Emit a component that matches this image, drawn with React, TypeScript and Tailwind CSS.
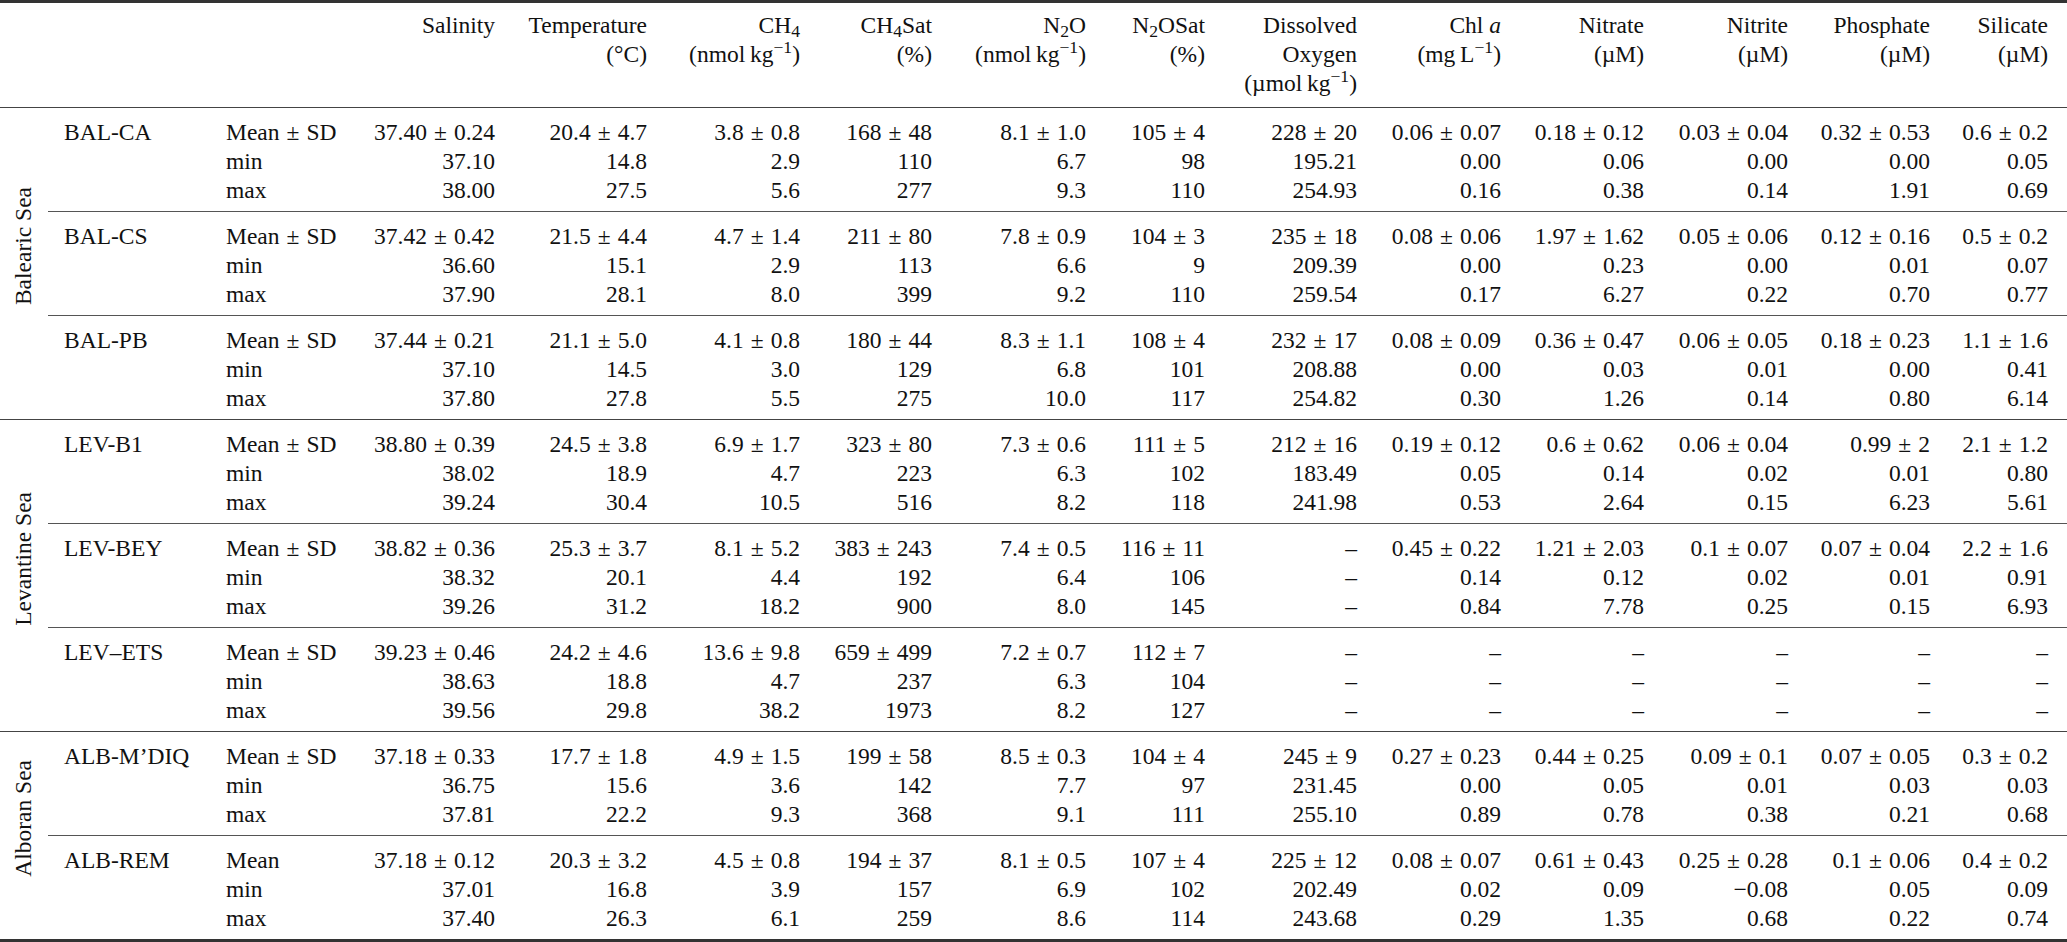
import React from 'react'

type Station = {
  name: string
  stats: string[]
  rows: string[][]
}

type Region = {
  label: string
  stations: Station[]
}

const D = '–'
const DASHES = [D, D, D, D, D, D]

const regions: Region[] = [
  {
    label: 'Balearic Sea',
    stations: [
      {
        name: 'BAL-CA',
        stats: ['Mean ± SD', 'min', 'max'],
        rows: [
          ['37.40±0.24', '20.4±4.7', '3.8±0.8', '168±48', '8.1±1.0', '105±4', '228±20', '0.06±0.07', '0.18±0.12', '0.03±0.04', '0.32±0.53', '0.6±0.2'],
          ['37.10', '14.8', '2.9', '110', '6.7', '98', '195.21', '0.00', '0.06', '0.00', '0.00', '0.05'],
          ['38.00', '27.5', '5.6', '277', '9.3', '110', '254.93', '0.16', '0.38', '0.14', '1.91', '0.69'],
        ],
      },
      {
        name: 'BAL-CS',
        stats: ['Mean ± SD', 'min', 'max'],
        rows: [
          ['37.42±0.42', '21.5±4.4', '4.7±1.4', '211±80', '7.8±0.9', '104±3', '235±18', '0.08±0.06', '1.97±1.62', '0.05±0.06', '0.12±0.16', '0.5±0.2'],
          ['36.60', '15.1', '2.9', '113', '6.6', '9', '209.39', '0.00', '0.23', '0.00', '0.01', '0.07'],
          ['37.90', '28.1', '8.0', '399', '9.2', '110', '259.54', '0.17', '6.27', '0.22', '0.70', '0.77'],
        ],
      },
      {
        name: 'BAL-PB',
        stats: ['Mean ± SD', 'min', 'max'],
        rows: [
          ['37.44±0.21', '21.1±5.0', '4.1±0.8', '180±44', '8.3±1.1', '108±4', '232±17', '0.08±0.09', '0.36±0.47', '0.06±0.05', '0.18±0.23', '1.1±1.6'],
          ['37.10', '14.5', '3.0', '129', '6.8', '101', '208.88', '0.00', '0.03', '0.01', '0.00', '0.41'],
          ['37.80', '27.8', '5.5', '275', '10.0', '117', '254.82', '0.30', '1.26', '0.14', '0.80', '6.14'],
        ],
      },
    ],
  },
  {
    label: 'Levantine Sea',
    stations: [
      {
        name: 'LEV-B1',
        stats: ['Mean ± SD', 'min', 'max'],
        rows: [
          ['38.80±0.39', '24.5±3.8', '6.9±1.7', '323±80', '7.3±0.6', '111±5', '212±16', '0.19±0.12', '0.6±0.62', '0.06±0.04', '0.99±2', '2.1±1.2'],
          ['38.02', '18.9', '4.7', '223', '6.3', '102', '183.49', '0.05', '0.14', '0.02', '0.01', '0.80'],
          ['39.24', '30.4', '10.5', '516', '8.2', '118', '241.98', '0.53', '2.64', '0.15', '6.23', '5.61'],
        ],
      },
      {
        name: 'LEV-BEY',
        stats: ['Mean ± SD', 'min', 'max'],
        rows: [
          ['38.82±0.36', '25.3±3.7', '8.1±5.2', '383±243', '7.4±0.5', '116±11', D, '0.45±0.22', '1.21±2.03', '0.1±0.07', '0.07±0.04', '2.2±1.6'],
          ['38.32', '20.1', '4.4', '192', '6.4', '106', D, '0.14', '0.12', '0.02', '0.01', '0.91'],
          ['39.26', '31.2', '18.2', '900', '8.0', '145', D, '0.84', '7.78', '0.25', '0.15', '6.93'],
        ],
      },
      {
        name: 'LEV–ETS',
        stats: ['Mean ± SD', 'min', 'max'],
        rows: [
          ['39.23±0.46', '24.2±4.6', '13.6±9.8', '659±499', '7.2±0.7', '112±7', ...DASHES],
          ['38.63', '18.8', '4.7', '237', '6.3', '104', ...DASHES],
          ['39.56', '29.8', '38.2', '1973', '8.2', '127', ...DASHES],
        ],
      },
    ],
  },
  {
    label: 'Alboran Sea',
    stations: [
      {
        name: 'ALB-M’DIQ',
        stats: ['Mean ± SD', 'min', 'max'],
        rows: [
          ['37.18±0.33', '17.7±1.8', '4.9±1.5', '199±58', '8.5±0.3', '104±4', '245±9', '0.27±0.23', '0.44±0.25', '0.09±0.1', '0.07±0.05', '0.3±0.2'],
          ['36.75', '15.6', '3.6', '142', '7.7', '97', '231.45', '0.00', '0.05', '0.01', '0.03', '0.03'],
          ['37.81', '22.2', '9.3', '368', '9.1', '111', '255.10', '0.89', '0.78', '0.38', '0.21', '0.68'],
        ],
      },
      {
        name: 'ALB-REM',
        stats: ['Mean', 'min', 'max'],
        rows: [
          ['37.18±0.12', '20.3±3.2', '4.5±0.8', '194±37', '8.1±0.5', '107±4', '225±12', '0.08±0.07', '0.61±0.43', '0.25±0.28', '0.1±0.06', '0.4±0.2'],
          ['37.01', '16.8', '3.9', '157', '6.9', '102', '202.49', '0.02', '0.09', '−0.08', '0.05', '0.09'],
          ['37.40', '26.3', '6.1', '259', '8.6', '114', '243.68', '0.29', '1.35', '0.68', '0.22', '0.74'],
        ],
      },
    ],
  },
]

// "a±b" -> a ± b, with math-style space round the sign
const PlusMinus = ({ value, sep = '±' }: { value: string; sep?: string }) => {
  const parts = value.split(sep)
  if (parts.length < 2) return <>{value}</>
  return (
    <>
      {parts[0]}
      <span className="mx-[7px]">±</span>
      {parts[1]}
    </>
  )
}

const PerKg = ({ prefix }: { prefix: string }) => (
  <>
    ({prefix}
    {'\u2009'}kg<sup>−1</sup>)
  </>
)

const headers: React.ReactNode[][] = [
  [<>Salinity</>],
  [<>Temperature</>, <>(°C)</>],
  [
    <>
      CH<sub>4</sub>
    </>,
    <PerKg prefix="nmol" />,
  ],
  [
    <>
      CH<sub>4</sub>Sat
    </>,
    <>(%)</>,
  ],
  [
    <>
      N<sub>2</sub>O
    </>,
    <PerKg prefix="nmol" />,
  ],
  [
    <>
      N<sub>2</sub>OSat
    </>,
    <>(%)</>,
  ],
  [<>Dissolved</>, <>Oxygen</>, <PerKg prefix="µmol" />],
  [
    <>
      Chl <i>a</i>
    </>,
    <>
      (mg{'\u2009'}L<sup>−1</sup>)
    </>,
  ],
  [<>Nitrate</>, <>(µM)</>],
  [<>Nitrite</>, <>(µM)</>],
  [<>Phosphate</>, <>(µM)</>],
  [<>Silicate</>, <>(µM)</>],
]

const StationBlock = ({ station, last }: { station: Station; last: boolean }) => (
  <div
    className={
      'grid grid-cols-[178px_146px_123px_152px_153px_132px_154px_119px_152px_144px_143px_144px_142px_118px] auto-rows-[29px] leading-[29px] pt-[10px] pb-[6px] ' +
      (last ? '' : 'border-b border-[#555]')
    }
  >
    {station.rows.map((row, i) => (
      <React.Fragment key={i}>
        <div className="pl-[16px] whitespace-nowrap">{i === 0 ? station.name : ''}</div>
        <div className="whitespace-nowrap">
          <PlusMinus value={station.stats[i]} sep=" ± " />
        </div>
        {row.map((v, j) => (
          <div key={j} className="text-right whitespace-nowrap">
            <PlusMinus value={v} />
          </div>
        ))}
      </React.Fragment>
    ))}
  </div>
)

const App = () => {
  return (
    <div className="w-[2067px] h-[942px] bg-white text-[#111] text-[23.5px] font-['Liberation_Serif',serif]">
      <div className="border-t-[3px] border-b-[3px] border-[#333]">
        <div className="grid grid-cols-[372px_123px_152px_153px_132px_154px_119px_152px_144px_143px_144px_142px_118px] h-[105px] pt-[8px] border-b border-[#444] leading-[29px]">
          <div />
          {headers.map((lines, i) => (
            <div key={i} className="flex flex-col items-end whitespace-nowrap">
              {lines.map((l, k) => (
                <div key={k} className="h-[29px]">
                  {l}
                </div>
              ))}
            </div>
          ))}
        </div>
        {regions.map((region, r) => (
          <div
            key={region.label}
            className={'flex ' + (r < regions.length - 1 ? 'border-b border-[#444]' : '')}
          >
            <div className="w-[48px] shrink-0 flex items-center justify-center pb-[34px]">
              <div className="[writing-mode:vertical-rl] rotate-180 whitespace-nowrap leading-none">
                {region.label}
              </div>
            </div>
            <div className="flex-1 flex flex-col">
              {region.stations.map((s, k) => (
                <StationBlock key={s.name} station={s} last={k === region.stations.length - 1} />
              ))}
            </div>
          </div>
        ))}
      </div>
    </div>
  )
}

export default App
